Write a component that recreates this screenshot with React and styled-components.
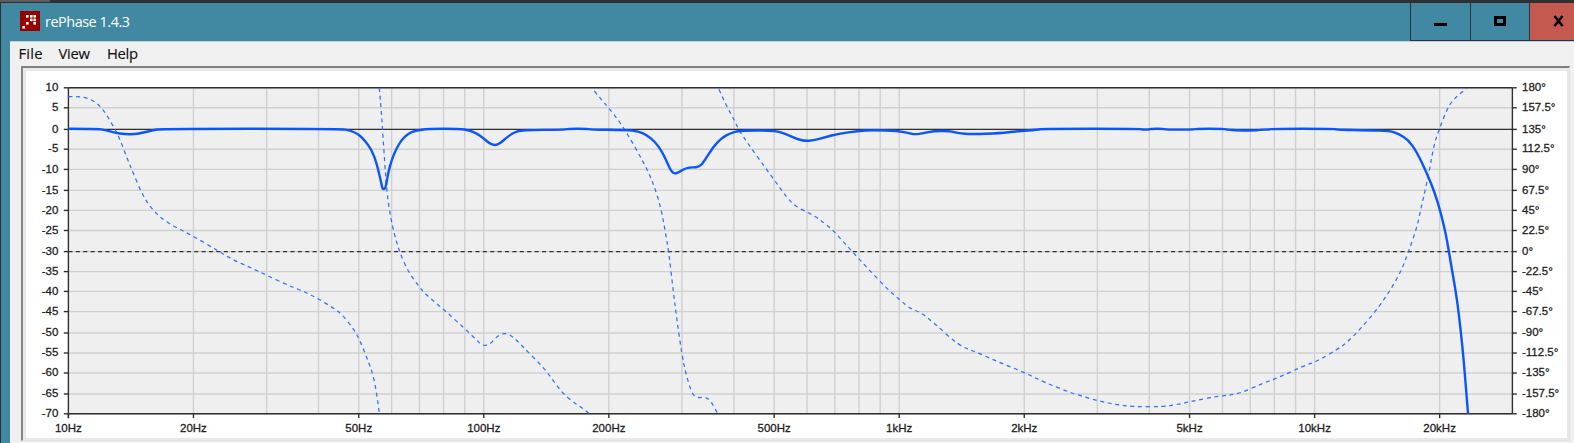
import React, { Component } from 'react';
import styled, { createGlobalStyle } from 'styled-components';

const color = {
  desktop: '#303032',
  teal: '#4189a2',
  red: '#c4594f',
  face: '#f0f0f0',
  plot: '#efefef',
  grid: '#d0d0d0',
  axis: '#303030',
  curve: '#0a55ff',
};

const GlobalStyle = createGlobalStyle`
  body {
    margin: 0;
    background: ${color.desktop};
    overflow: hidden;
  }
`;

const Desktop = styled.div`
  box-sizing: border-box;
  width: 1574px;
  height: 443px;
  display: flex;
  flex-direction: column;
  overflow: hidden;
  background: ${color.desktop};
`;

const BackgroundTab = styled.div`
  flex: none;
  width: 50px;
  height: 2px;
  margin-bottom: 1px;
  background: #5c5c5c;
`;

const Window = styled.div`
  flex: 1;
  display: flex;
  flex-direction: column;
  margin-left: 1px;
  padding-left: 9px;
  background: ${color.teal};
`;

const TitleBar = styled.div`
  flex: none;
  height: 38px;
  display: flex;
  align-items: flex-start;
`;

const AppIcon = styled.svg`
  flex: none;
  margin: 8px 5px 0 10px;
`;

const Title = styled.div`
  flex: 1;
  padding-top: 9px;
  font: 14.4px/20px 'Open Sans', sans-serif;
  letter-spacing: -0.45px;
  color: #fff;
`;

const WindowButton = styled.button`
  box-sizing: border-box;
  width: ${props => props.width}px;
  height: 38px;
  padding: 0 0 0 ${props => props.indent}px;
  border: 0;
  border-left: 1px solid #29343a;
  border-bottom: 1px solid #29343a;
  background: ${props => (props.$danger ? color.red : color.teal)};
  display: flex;
  align-items: flex-start;
  svg {
    margin-top: 12px;
  }
`;

const Client = styled.div`
  flex: 1;
  border-top: 1px solid #c3ced6;
  background: ${color.face};
`;

const MenuBar = styled.div`
  height: 24px;
  display: flex;
  gap: 17.5px;
  padding-left: 8.5px;
  font: 14.8px/22px 'Open Sans', sans-serif;
  color: #111;
  -webkit-text-stroke: 0.15px #111;
`;

const MenuItem = styled.span`
  width: ${props => props.width}px;
  white-space: nowrap;
  letter-spacing: ${props => props.$spacing || 0}px;
`;

const ChartFrame = styled.div`
  box-sizing: border-box;
  width: 1549px;
  height: 375px;
  margin-left: 11px;
  border-style: solid;
  border-width: 2px 1px 1px 2px;
  border-color: #808080 #e2e2e2 #e2e2e2 #858585;
  background: #e9e9e9;
  padding: 3px 2px 2px 3px;
`;

const Chart = styled.svg`
  display: block;
  background: #fff;
  text {
    font: 11.5px 'Liberation Sans', Arial, sans-serif;
    fill: #1c1c1c;
    stroke: #1c1c1c;
    stroke-width: 0.28px;
  }
`;

const GridLine = styled.line`
  stroke: ${color.grid};
  stroke-width: 1.4;
`;

const AxisLine = styled.line`
  stroke: ${color.axis};
  stroke-width: 1.4;
`;

const Magnitude = styled.path`
  fill: none;
  stroke: ${color.curve};
  stroke-width: 2.4;
  stroke-linejoin: round;
`;

const Phase = styled.path`
  fill: none;
  stroke: #2f70ff;
  stroke-width: 1.25;
  stroke-dasharray: 4 3.7;
`;

const LEFT = 68.4;
const RIGHT = 1512.4;
const TOP = 87.8;
const BOTTOM = 413.8;
const DECADE = 415.4;

const freqX = freq => LEFT + DECADE * Math.log10(freq / 10);

// rounds the corners of a point list by running curves between the midpoints
const smooth = points => {
  const list = points.trim().split(/\s+/).map(pair => pair.split(',').map(Number));
  const last = list[list.length - 1];
  const curves = list.slice(1, -1).map(([x, y], i) => {
    const next = list[i + 2];
    return `Q${x},${y} ${(x + next[0]) / 2},${(y + next[1]) / 2}`;
  });
  return `M${list[0]} ${curves.join(' ')} L${last}`;
};

// row position, level in dB, phase in degrees
const rows = [
  [87.8, '10', '180°'],
  [107.8, '5', '157.5°'],
  [129.4, '0', '135°'],
  [149.2, '-5', '112.5°'],
  [169.4, '-10', '90°'],
  [190.4, '-15', '67.5°'],
  [210.4, '-20', '45°'],
  [230.5, '-25', '22.5°'],
  [251.6, '-30', '0°'],
  [271.6, '-35', '-22.5°'],
  [291.4, '-40', '-45°'],
  [311.6, '-45', '-67.5°'],
  [333, '-50', '-90°'],
  [353, '-55', '-112.5°'],
  [373, '-60', '-135°'],
  [394, '-65', '-157.5°'],
  [413.8, '-70', '-180°'],
];

const freqLabels = [
  [10, '10Hz'],
  [20, '20Hz'],
  [50, '50Hz'],
  [100, '100Hz'],
  [200, '200Hz'],
  [500, '500Hz'],
  [1000, '1kHz'],
  [2000, '2kHz'],
  [5000, '5kHz'],
  [10000, '10kHz'],
  [20000, '20kHz'],
];

const gridFreqs = [10, 100, 1000, 10000]
  .reduce((all, base) => all.concat([1, 2, 3, 4, 5, 6, 7, 8, 9].map(n => n * base)), [])
  .filter(freq => freq > 10 && freq < 30000);

const magnitude = `
  68.3,128.7 96.5,128.7 105,130 115,132.7 125,134.3 135,134.3 143,132.7 153,130.3
  162,128.8 340.7,128.8 350,130.5 358.3,134 365,140.7 371.7,150 376.7,163.3 381,181.7
  382.6,189.6 385.6,188.6 388,173.3 391.7,160 396,149.3 401.7,139.7 408.3,133.7 415,130.7
  428.3,128.8 459.3,128.8 469.3,130.3 476.7,133.5 483.3,138 489.3,143.5 495,145.4
  500,143.5 506.7,137.5 513.3,132.7 521.7,130 565,129.7 566.7,128.8 589.3,128.8
  590.7,129.6 626.7,130 638.3,131.3 646.7,135 655,141.7 661.7,151 666.7,161.7
  672.2,173.2 677.3,173.5 686,167.5 699.3,167.3 705,160 713.3,146.7 721.7,138 730,133.3
  740,130.5 775,130.5 786.7,134.3 796.7,139 805,141 813.3,140.5 825,137.3 838.3,133.7
  858.3,131 871.7,130 898.3,131 906.7,132.7 915,134.5 923.3,133.3 933.3,131 950,131
  958.3,133.3 971.7,134.3 1000,133.3 1016.7,131.3 1038.3,129.7 1042.7,128.8
  1140.7,128.8 1141.7,129.6 1149,129.6 1150,128.8 1164.3,128.8 1165.7,129.6
  1193.3,129.6 1194.5,128.8 1225,128.8 1226,129.6 1238.3,130.5 1258.3,130.5
  1260,129.6 1269.5,129.6 1270.5,128.8 1335,128.8 1336,129.6 1368.3,130.3 1390,131
  1398.3,133.7 1408.3,140 1416.7,151.7 1426.7,172.7 1435,193.3 1441,213.3
  1446.7,238.3 1449.7,256.7 1456.7,296.7 1460.7,330 1464,363.3 1468,413.5`;

// the phase wraps at ±180°, so each pass is its own line
const phase = [
  `68.3,96.5 81.7,96.5 91.7,99.7 100,105.7 106.7,115 115,129.3 120,139.3 126.7,157.3
   133.3,173.3 141.7,193.3 151.7,209.3 166.7,222.7 191.7,235.3 218.3,251 233.3,260
   250,267.3 266.7,275.3 286.7,284.7 303.3,291.3 318.3,298.7 333.3,308 341.7,314
   354,329.3 360,340.7 366.7,357.3 372.7,373.3 376.7,393.3 379.3,413.3`,
  `379.3,87.7 381,106.7 383,136.7 385,166.7 387,193.3 390.7,218.3 395,236.7 400,253.3
   408.3,271.7 418.7,286 423.3,291.7 430.7,298.7 445,310.7 463.3,327.3 476.7,340
   481.7,345.3 489.3,345.3 496.7,336.3 505,332.7 513.3,336.7 526.7,350.7 543.3,367.3
   553.3,380.7 563.3,394 573.3,402 581.7,407.7 589,413.3`,
  `594.3,91 601.7,100 609,108.3 620,122.3 630,138.3 640,156 648.3,171.7 655,188.3
   661,208.3 665,230 669,253.3 673.3,291.7 676.7,318.3 681.7,353.3 685.7,373.3
   692,394 697.3,398 705,396.7 710.7,400.7 717.3,413`,
  `719,89.3 726.7,106.7 733.3,117.7 738.3,129.3 748.3,144 765,167.3 776.7,183.3
   786.7,197.3 795,206 808.3,212.7 816.7,217.3 823.3,222.3 831.7,229 841.7,240
   851.7,251 866.7,267.3 888.3,290 900,300 910.7,309 920,312 933.3,322.3 958.3,345.3
   978.3,353 1000,362.7 1023.3,372 1045,382.7 1075,394.3 1100,401.3 1116.7,404.7
   1133.3,406.7 1163.3,406.7 1180,404 1190,401.7 1218.3,396 1238.3,394.3 1263.3,383
   1280,377 1301.7,366.7 1318.3,360.7 1338.3,348.7 1346.7,342.7 1360,329.3
   1376.7,310 1390,290.7 1401.7,270 1408.3,252 1416.7,228.3 1421.7,205 1426,186.7
   1430.7,163.3 1434.3,143.3 1440,127.3 1446.7,110 1451.7,101.7 1458.3,95 1466.7,88.3`,
];

const iconDots = [
  [6, 4], [10, 4], [13.4, 4],
  [10, 7.6], [13.4, 7.6],
  [6, 11], [13.4, 11],
  [2.4, 15],
];

class ResponseChart extends Component {
  render() {
    return (
      <Chart width="1541" height="367" viewBox="26 71 1541 367">
        <rect x={LEFT} y={TOP} width={RIGHT - LEFT} height={BOTTOM - TOP} fill={color.plot} />
        {gridFreqs.map(freq => (
          <GridLine key={freq} x1={freqX(freq)} x2={freqX(freq)} y1={TOP} y2={BOTTOM} />
        ))}
        {rows.map(([y, level]) => (
          <GridLine key={level} x1={LEFT} x2={RIGHT} y1={y} y2={y} />
        ))}

        <AxisLine x1={LEFT} x2={RIGHT} y1={TOP} y2={TOP} />
        <AxisLine x1={LEFT} x2={RIGHT} y1={129.4} y2={129.4} />
        <AxisLine x1={LEFT} x2={RIGHT} y1={251.6} y2={251.6} strokeDasharray="4.1 3.3" />
        <AxisLine x1={LEFT} x2={RIGHT} y1={BOTTOM} y2={BOTTOM} />
        <AxisLine x1={LEFT} x2={LEFT} y1={TOP} y2={BOTTOM + 4.5} />
        <AxisLine x1={RIGHT} x2={RIGHT} y1={TOP} y2={BOTTOM} />

        {rows.map(([y, level, degrees]) => (
          <g key={level}>
            <AxisLine x1={LEFT - 4.6} x2={LEFT} y1={y} y2={y} />
            <AxisLine x1={RIGHT} x2={RIGHT + 4.4} y1={y} y2={y} />
            <text x="58.3" y={y + 3.1} textAnchor="end">{level}</text>
            <text x="1522" y={y + 3.1}>{degrees}</text>
          </g>
        ))}
        {freqLabels.map(([freq, label]) => (
          <g key={label}>
            <AxisLine x1={freqX(freq)} x2={freqX(freq)} y1={BOTTOM} y2={BOTTOM + 4.3} />
            <text x={freqX(freq)} y="432.4" textAnchor="middle">{label}</text>
          </g>
        ))}

        {phase.map(points => (
          <Phase key={points} d={smooth(points)} />
        ))}
        <Magnitude d={smooth(magnitude)} />
      </Chart>
    )
  }
}

class App extends Component {
  render() {
    return (
      <Desktop>
        <GlobalStyle />
        <BackgroundTab />
        <Window>
          <TitleBar>
            <AppIcon width="20" height="20" viewBox="0 0 20 20">
              <rect width="20" height="20" fill="#970000" />
              {iconDots.map(([x, y]) => (
                <rect key={`${x}-${y}`} x={x} y={y} width="2.6" height="2.6" fill="#fff" />
              ))}
            </AppIcon>
            <Title>rePhase 1.4.3</Title>
            <WindowButton width={60} indent={23}>
              <svg width="13" height="14">
                <rect y="8" width="13" height="3" />
              </svg>
            </WindowButton>
            <WindowButton width={59} indent={23}>
              <svg width="12" height="14">
                <rect x="1.5" y="2.5" width="9" height="7" fill="none" stroke="#000" strokeWidth="3" />
              </svg>
            </WindowButton>
            <WindowButton width={45} indent={23} $danger>
              <svg width="11" height="14">
                <path d="M1.5 1 L9.5 11 M9.5 1 L1.5 11" stroke="#000" strokeWidth="2.6" />
              </svg>
            </WindowButton>
          </TitleBar>
          <Client>
            <MenuBar>
              <MenuItem width={22.5} $spacing={0.2}>File</MenuItem>
              <MenuItem width={31} $spacing={-0.3}>View</MenuItem>
              <MenuItem width={32} $spacing={-0.3}>Help</MenuItem>
            </MenuBar>
            <ChartFrame>
              <ResponseChart />
            </ChartFrame>
          </Client>
        </Window>
      </Desktop>
    )
  }
}

export default App;
